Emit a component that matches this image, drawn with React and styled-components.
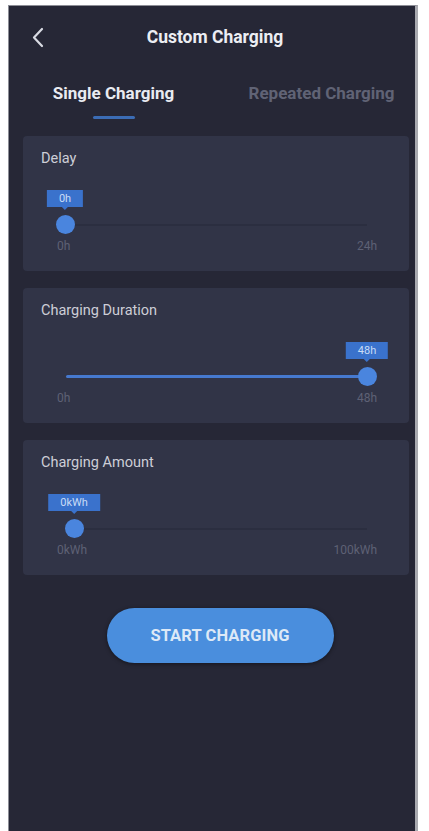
import React from 'react'
import styled, { createGlobalStyle } from 'styled-components'

const GlobalStyle = createGlobalStyle`
  html, body {
    margin: 0;
    padding: 0;
    background: #ffffff;
  }
  body {
    font-family: Roboto, 'Liberation Sans', Arial, sans-serif;
  }
  * { box-sizing: border-box; }
`

const Page = styled.div`
  width: 429px;
  height: 831px;
  padding: 5px 11px 0 8px;
  overflow: hidden;
`

const Phone = styled.div`
  height: 826px;
  background: #262736;
  border: 1px solid #8d8e96;
  border-right: 3px solid #a9aab0;
  border-bottom: none;
  display: flex;
  flex-direction: column;
`

const Header = styled.div`
  height: 62px;
  display: grid;
  grid-template-columns: 60px 1fr 60px;
  align-items: center;
`

const BackBtn = styled.button`
  background: none;
  border: none;
  padding: 0 0 0 23px;
  display: flex;
  align-items: center;
  cursor: pointer;
`

const Title = styled.div`
  text-align: center;
  color: #eceef3;
  font-size: 17.5px;
  font-weight: 700;
  padding-left: 6px;
`

const Tabs = styled.div`
  display: flex;
  height: 52px;
`

const Tab = styled.div`
  flex: 1;
  display: flex;
  flex-direction: column;
  align-items: center;
  padding-top: 15px;
  transform: translateX(${p => (p.$active ? '3px' : '8px')});
`

const TabLabel = styled.span`
  font-size: 17px;
  line-height: 20px;
  font-weight: 700;
  color: ${p => (p.$active ? '#e9ebf1' : '#606375')};
`

const TabLine = styled.span`
  margin-top: 13px;
  width: 42px;
  height: 3px;
  border-radius: 2px;
  background: ${p => (p.$active ? '#3b6cb5' : 'transparent')};
`

const Content = styled.div`
  padding: 16px 6px 0 14px;
  display: flex;
  flex-direction: column;
  gap: 17px;
`

const Card = styled.section`
  height: 135px;
  background: #313447;
  border-radius: 4px;
  padding: 14px 0 0 0;
`

const CardTitle = styled.div`
  padding-left: 18px;
  font-size: 14.5px;
  line-height: 18px;
  color: #cdced7;
`

const Slider = styled.div`
  margin: 22px 32px 0 34px;
`

const SliderArea = styled.div`
  position: relative;
  height: 44px;
`

const Track = styled.div`
  position: absolute;
  top: 34px;
  height: 2px;
  background: #2b2e40;
`

const Fill = styled.div`
  position: absolute;
  top: 33px;
  height: 3px;
  border-radius: 2px;
  background: #4679cf;
`

const Thumb = styled.div`
  position: absolute;
  top: 25px;
  width: 19px;
  height: 19px;
  margin-left: -9.5px;
  border-radius: 50%;
  background: #4a85de;
`

const Tip = styled.div`
  position: absolute;
  top: 0;
  transform: translateX(-50%);
  height: 17px;
  padding: 0 12px;
  background: #3a72cc;
  color: #c9dcf6;
  font-size: 11px;
  line-height: 17px;
  white-space: nowrap;
  &::after {
    content: '';
    position: absolute;
    left: 50%;
    bottom: -3px;
    margin-left: -3px;
    border-left: 3px solid transparent;
    border-right: 3px solid transparent;
    border-top: 3px solid #3a72cc;
  }
`

const Scale = styled.div`
  margin-top: 5px;
  display: flex;
  justify-content: space-between;
  font-size: 12px;
  line-height: 14px;
  color: #5e6175;
`

const StartButton = styled.button`
  align-self: center;
  margin: 16px 0 0 8px;
  width: 227px;
  height: 55px;
  border: none;
  border-radius: 28px;
  background: #4a8edd;
  color: #dde9f7;
  font-family: Roboto, 'Liberation Sans', Arial, sans-serif;
  font-size: 16.5px;
  font-weight: 700;
  letter-spacing: 0.1px;
  box-shadow: 0 1px 4px rgba(0, 0, 0, 0.45);
  cursor: pointer;
`

function RangeSlider({ value, max, min, unit, left, right }) {
	const width = 320 - left - right
	const x = left + (value / max) * width
	return (
		<Slider>
			<SliderArea>
				<Track style={{ left: x, width: left + width - x }} />
				<Fill style={{ left: left, width: x - left }} />
				<Tip style={{ left: x }}>{value + unit}</Tip>
				<Thumb style={{ left: x }} />
			</SliderArea>
			<Scale>
				<span>{min + unit}</span>
				<span>{max + unit}</span>
			</Scale>
		</Slider>
	)
}

const cards = [
	{ title: 'Delay', value: 0, min: 0, max: 24, unit: 'h', left: 8, right: 10 },
	{ title: 'Charging Duration', value: 48, min: 0, max: 48, unit: 'h', left: 9, right: 10 },
	{ title: 'Charging Amount', value: 0, min: 0, max: 100, unit: 'kWh', left: 17, right: 10 }
]

export default function App() {
	return (
		<Page>
			<GlobalStyle />
			<Phone>
				<Header>
					<BackBtn aria-label='back'>
						<svg width='12' height='21' viewBox='0 0 12 21'>
							<polyline points='10,2 2,10.5 10,19' fill='none' stroke='#d9dbe3' strokeWidth='2.2' strokeLinecap='round' strokeLinejoin='round' />
						</svg>
					</BackBtn>
					<Title>Custom Charging</Title>
					<span />
				</Header>
				<Tabs>
					<Tab $active>
						<TabLabel $active>Single Charging</TabLabel>
						<TabLine $active />
					</Tab>
					<Tab>
						<TabLabel>Repeated Charging</TabLabel>
						<TabLine />
					</Tab>
				</Tabs>
				<Content>
					{cards.map(c => (
						<Card key={c.title}>
							<CardTitle>{c.title}</CardTitle>
							<RangeSlider {...c} />
						</Card>
					))}
					<StartButton>START CHARGING</StartButton>
				</Content>
			</Phone>
		</Page>
	)
}
